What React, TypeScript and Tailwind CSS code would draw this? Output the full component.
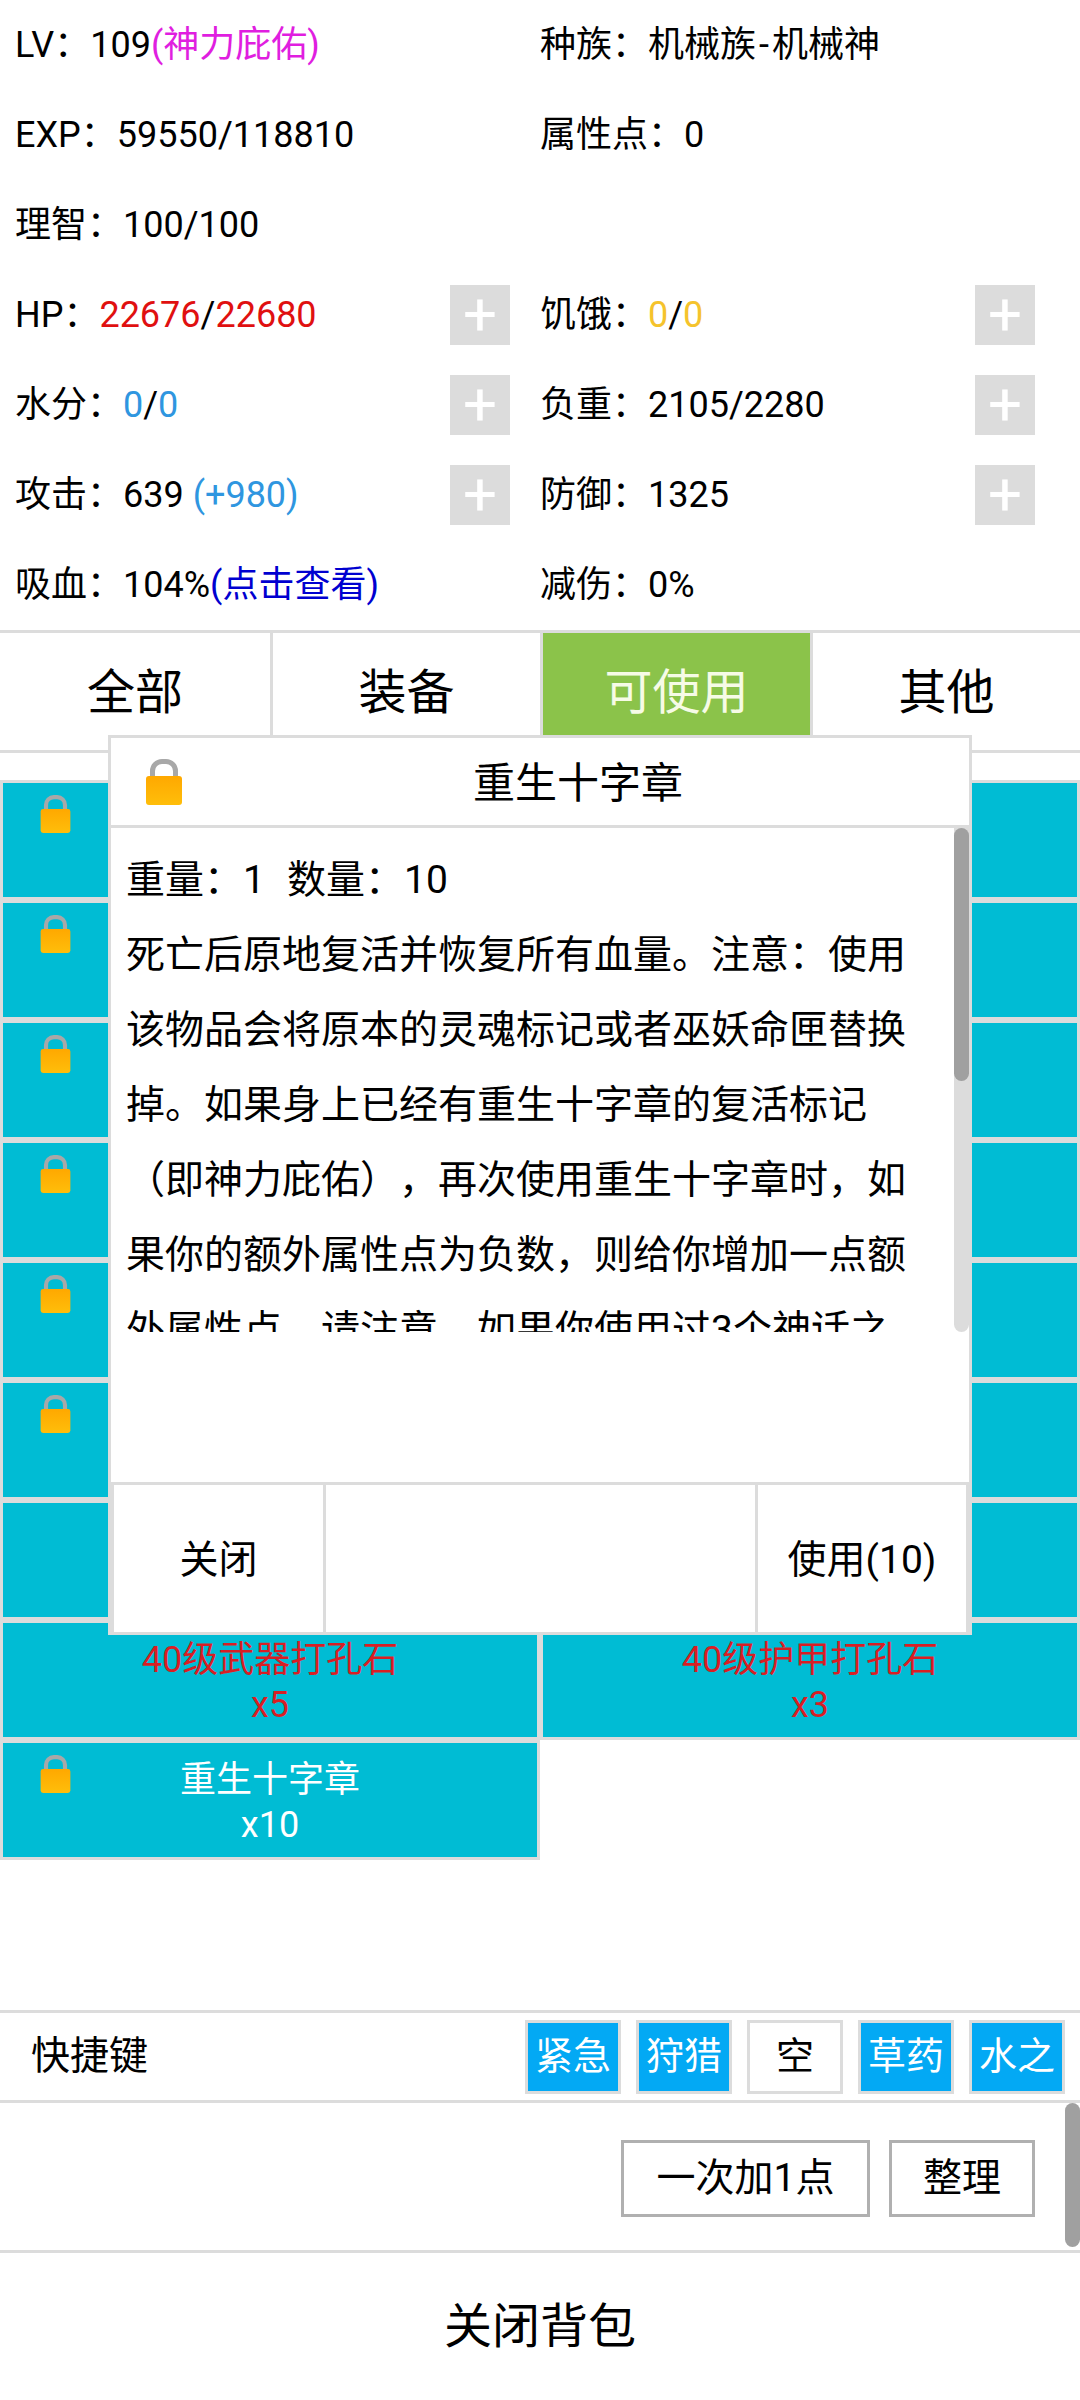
const line = "border-[#dcdcdc]";
const colon = "\uFF1A";

const LockIcon = ({ className }: { className: string }) => (
	<svg viewBox="0 0 36 46" className={className}>
		<defs>
			<linearGradient id="lockBody" x1="0" y1="0" x2="0" y2="1">
				<stop offset="0" stopColor="#ffa800" />
				<stop offset="1" stopColor="#ffbe0a" />
			</linearGradient>
		</defs>
		<path
			d="M6.5 18V12a9.5 9.5 0 0 1 9.5-9.5h4a9.5 9.5 0 0 1 9.5 9.5V18"
			fill="none"
			stroke="#a8a8a8"
			strokeWidth="5"
		/>
		<rect x="0" y="17" width="36" height="29" rx="3" fill="url(#lockBody)" />
	</svg>
);

const PlusButton = () => (
	<div className="w-[60px] h-[60px] bg-[#dcdcdc] flex items-center justify-center shrink-0 text-white text-[60px] leading-none">
		+
	</div>
);

interface StatCell {
	label: string;
	value?: React.ReactNode;
	plus?: boolean;
}

const stats: StatCell[] = [
	{
		label: "LV" + colon,
		value: (
			<>
				109<span className="text-[#e01ee0]">(神力庇佑)</span>
			</>
		),
	},
	{
		label: "种族" + colon,
		value: (
			<>
				机械族<span className="px-[3px]">-</span>机械神
			</>
		),
	},
	{ label: "EXP" + colon, value: "59550/118810" },
	{ label: "属性点" + colon, value: "0" },
	{ label: "理智" + colon, value: "100/100" },
	{ label: "" },
	{
		label: "HP" + colon,
		value: (
			<>
				<span className="text-[#e01010]">22676</span>/
				<span className="text-[#e01010]">22680</span>
			</>
		),
		plus: true,
	},
	{
		label: "饥饿" + colon,
		value: (
			<>
				<span className="text-[#f5c32c]">0</span>/
				<span className="text-[#f5c32c]">0</span>
			</>
		),
		plus: true,
	},
	{
		label: "水分" + colon,
		value: (
			<>
				<span className="text-[#2f96e0]">0</span>/
				<span className="text-[#2f96e0]">0</span>
			</>
		),
		plus: true,
	},
	{ label: "负重" + colon, value: "2105/2280", plus: true },
	{
		label: "攻击" + colon,
		value: (
			<>
				639 <span className="text-[#2f96e0]">(+980)</span>
			</>
		),
		plus: true,
	},
	{ label: "防御" + colon, value: "1325", plus: true },
	{
		label: "吸血" + colon,
		value: (
			<>
				104%<span className="text-[#0000d0]">(点击查看)</span>
			</>
		),
	},
	{ label: "减伤" + colon, value: "0%" },
];

const tabs = ["全部", "装备", "可使用", "其他"];

interface Item {
	name?: string;
	count?: string;
	lock?: boolean;
	red?: boolean;
}

const items: Item[] = [
	{ lock: true },
	{},
	{ lock: true },
	{},
	{ lock: true },
	{},
	{ lock: true },
	{},
	{ lock: true },
	{},
	{ lock: true },
	{},
	{},
	{},
	{ name: "40级武器打孔石", count: "x5", red: true },
	{ name: "40级护甲打孔石", count: "x3", red: true },
	{ name: "重生十字章", count: "x10", lock: true },
];

const shortcuts = ["紧急", "狩猎", "空", "草药", "水之"];

const description =
	"死亡后原地复活并恢复所有血量。注意\uFF1A使用该物品会将原本的灵魂标记或者巫妖命匣替换掉。如果身上已经有重生十字章的复活标记\uFF08即神力庇佑\uFF09\uFF0C再次使用重生十字章时\uFF0C如果你的额外属性点为负数\uFF0C则给你增加一点额外属性点。请注意\uFF0C如果你使用过3个神话之";

const ItemDialog = () => (
	<div className={`absolute left-[108px] top-[735px] w-[864px] h-[900px] bg-white border-[3px] ${line} flex flex-col`}>
		<div className={`h-[90px] shrink-0 border-b-[3px] ${line} flex items-center pl-[35px]`}>
			<LockIcon className="w-[36px] h-[46px] shrink-0" />
			<div className="flex-1 text-center text-[42px] pl-[5px] pt-[3px]">重生十字章</div>
		</div>
		<div className="flex-1">
			<div className="relative h-[504px] overflow-hidden pl-[15px] pr-[30px] pt-[15px] text-[39px] leading-[75px] [text-spacing-trim:space-all]">
				<p>
					重量{colon}1<span className="pl-[22px]">数量</span>{colon}10
				</p>
				<p className="w-[800px]">{description}</p>
				<div className="absolute right-0 top-0 w-[15px] h-full bg-[#dcdcdc] rounded-b-[8px]">
					<div className="w-full h-[253px] bg-[#a0a0a0] rounded-full" />
				</div>
			</div>
		</div>
		<div className={`h-[150px] shrink-0 border-t-[3px] ${line} grid grid-cols-[215px_1fr_214px] text-[39px]`}>
			<div className={`border-x-[3px] ${line} flex items-center justify-center pt-[3px]`}>关闭</div>
			<div />
			<div className={`border-x-[3px] ${line} flex items-center justify-center pt-[3px]`}>使用(10)</div>
		</div>
	</div>
);

export default function App() {
	return (
		<div className="relative w-[1080px] h-[2400px] bg-white text-black overflow-hidden font-[Roboto,'Noto_Sans_CJK_SC',sans-serif] text-[36px] flex flex-col">
			<div className="grid grid-cols-[525px_525px]">
				{stats.map((stat, index) => (
					<div key={index} className="h-[90px] flex items-center pl-[15px] pr-[15px]">
						<div className="flex-1 whitespace-nowrap">
							{stat.label}
							{stat.value}
						</div>
						{stat.plus && <PlusButton />}
					</div>
				))}
			</div>

			<div className={`grid grid-cols-4 h-[123px] border-y-[3px] ${line} text-[48px]`}>
				{tabs.map((tab, index) => (
					<div
						key={tab}
						className={`flex items-center justify-center pt-[2px] ${index > 0 ? `border-l-[3px] ${line}` : ""} ${
							tab === "可使用" ? "bg-[#8bc34a] text-[#f6fbe6]" : ""
						}`}
					>
						{tab}
					</div>
				))}
			</div>

			<div className="grid grid-cols-2 auto-rows-[120px] mt-[27px] h-[1080px]">
				{items.map((item, index) => (
					<div
						key={index}
						className={`relative border-[3px] ${line} bg-[#00bcd4] flex flex-col items-center justify-center pt-[5px] leading-[45px] ${
							item.red ? "text-[#d81e24]" : "text-white"
						}`}
					>
						{item.lock && <LockIcon className="absolute left-[37px] top-[12px] w-[31px] h-[38px]" />}
						<div>{item.name}</div>
						<div>{item.count}</div>
					</div>
				))}
			</div>

			<div className={`mt-[150px] h-[90px] border-t-[3px] ${line} flex items-center justify-between pl-[31px] pr-[15px] text-[38px]`}>
				<span className="text-[39px]">快捷键</span>
				<div className="flex gap-[15px]">
					{shortcuts.map((label) => (
						<div
							key={label}
							className={`w-[96px] h-[74px] border-[3px] ${line} flex items-center justify-center ${
								label === "空" ? "bg-white text-black" : "bg-[#03a9f4] text-white"
							}`}
						>
							{label}
						</div>
					))}
				</div>
			</div>

			<div className={`relative h-[153px] border-y-[3px] ${line} flex justify-end gap-[19px] pt-[37px] pr-[45px] text-[39px]`}>
				<div className="w-[249px] h-[77px] border-[3px] border-[#b0b0b0] flex items-center justify-center">一次加1点</div>
				<div className="w-[146px] h-[77px] border-[3px] border-[#b0b0b0] flex items-center justify-center">整理</div>
				<div className="absolute right-0 top-0 w-[15px] h-[144px] bg-[#a0a0a0] rounded-full" />
			</div>

			<div className="flex-1 flex items-center justify-center text-[48px]">关闭背包</div>

			<ItemDialog />
		</div>
	);
}
